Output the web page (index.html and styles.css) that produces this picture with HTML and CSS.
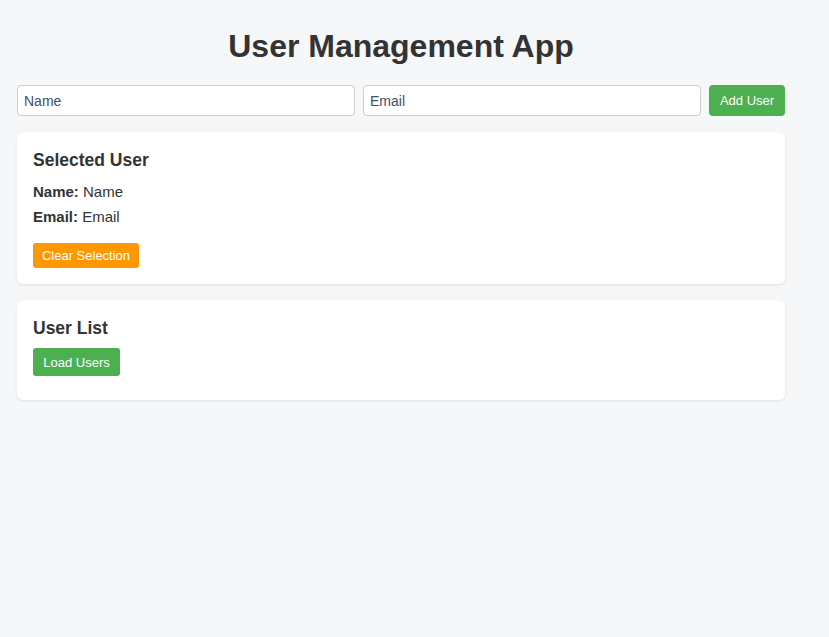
FILE: index.html
```html
<!DOCTYPE html>
<html lang="en">
<head>
<meta charset="utf-8">
<title>User Management App</title>
<link rel="stylesheet" href="styles.css">
</head>
<body>
<div class="app">
  <h1 class="title">User Management App</h1>
  <div class="form-row">
    <input class="field" type="text" placeholder="Name">
    <input class="field" type="text" placeholder="Email">
    <button class="btn btn-green btn-add">Add User</button>
  </div>
  <section class="card">
    <h3 class="card-title">Selected User</h3>
    <p class="info info-first"><strong>Name:</strong> Name</p>
    <p class="info"><strong>Email:</strong> Email</p>
    <button class="btn btn-orange">Clear Selection</button>
  </section>
  <section class="card card-list">
    <h3 class="card-title">User List</h3>
    <button class="btn btn-green btn-load">Load Users</button>
  </section>
</div>
</body>
</html>
```
FILE: styles.css
```css
html, body {
  margin: 0;
  padding: 0;
  background: #f6f7f9;
}
body {
  font-family: "Liberation Sans", Arial, sans-serif;
  color: #333;
}
.app {
  width: 768px;
  padding: 0 17px;
}
.title {
  margin: 28px 0 20px;
  font-size: 32px;
  line-height: 37px;
  font-weight: bold;
  text-align: center;
  color: #333;
}
.form-row {
  display: flex;
  gap: 8px;
  margin-bottom: 16px;
}
.field {
  flex: 1;
  min-width: 0;
  height: 31px;
  box-sizing: border-box;
  padding: 0 6px;
  border: 1px solid #ccc;
  border-radius: 4px;
  background: #fff;
  font-family: "Liberation Sans", Arial, sans-serif;
  font-size: 14px;
  color: #333;
}
.field::placeholder {
  color: #3f5069;
  opacity: 1;
}
.btn {
  border: none;
  color: #fff;
  font-family: "Liberation Sans", Arial, sans-serif;
  cursor: pointer;
  display: block;
}
.btn-green { background: #4caf50; }
.btn-orange { background: #ff9800; }
.btn-add {
  width: 76px;
  height: 31px;
  padding: 0;
  border-radius: 4px;
  font-size: 13px;
}
.card {
  background: #fff;
  border-radius: 6px;
  box-shadow: 0 1px 3px rgba(0, 0, 0, 0.1);
  padding: 16px;
  margin-bottom: 16px;
}
.card-list {
  padding-bottom: 24px;
}
.card-title {
  margin: 0;
  font-size: 17.5px;
  line-height: 24px;
  font-weight: bold;
  color: #333;
}
.info {
  margin: 5px 0 0;
  font-size: 15px;
  line-height: 20px;
}
.info-first {
  margin-top: 10px;
}
.btn-orange {
  margin-top: 16px;
  height: 25px;
  width: 106px;
  padding: 0;
  border-radius: 3px;
  font-size: 13px;
}
.btn-load {
  margin-top: 8px;
  height: 28px;
  width: 87px;
  padding: 0;
  border-radius: 3px;
  font-size: 13px;
}
```
